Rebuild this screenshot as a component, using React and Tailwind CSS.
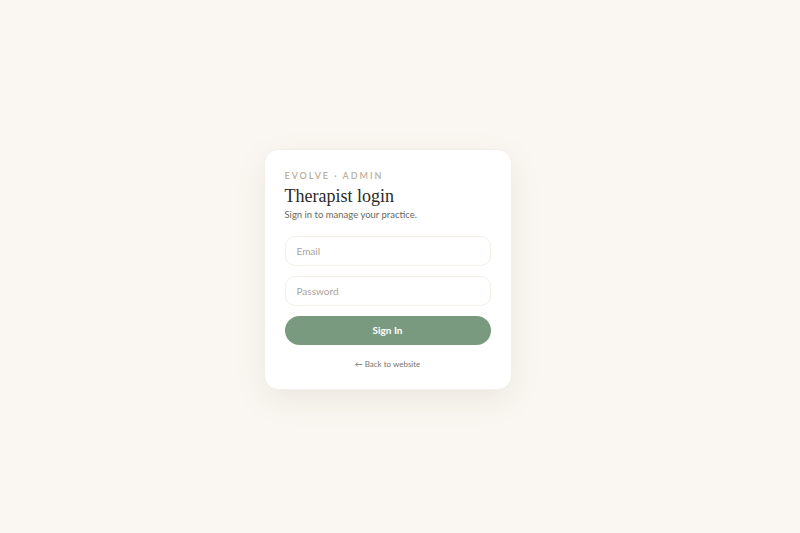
import React from 'react';

const App = () => {
  return (
    <div className="min-h-screen w-full bg-[#faf7f2] flex items-center justify-center pr-[25px] pt-[6px]" style={{ fontFamily: 'Lato, "Noto Sans", sans-serif' }}>
      <div className="w-[248px] bg-white rounded-[14px] px-5 pt-[21px] pb-[19px] shadow-[0_10px_30px_rgba(120,100,70,0.10)] border border-[#f3efe8]">
        <p className="text-[9px] font-semibold tracking-[0.22em] text-[#bbb09a] leading-none">EVOLVE · ADMIN</p>
        <h1 className="mt-[5px] text-[18px] leading-[22px] text-[#2b2a27]" style={{ fontFamily: '"Liberation Serif", "DejaVu Serif", serif' }}>
          Therapist login
        </h1>
        <p className="mt-[1px] text-[9.5px] text-[#6b6860]">Sign in to manage your practice.</p>
        <form className="mt-[14px] flex flex-col gap-[10px]" onSubmit={e => e.preventDefault()}>
          <input
            type="email"
            placeholder="Email"
            className="h-[30px] w-full rounded-[10px] border border-[#f3efe6] px-[11px] text-[10px] text-[#3a3835] placeholder:text-[#a8a49c] outline-none"
          />
          <input
            type="password"
            placeholder="Password"
            className="h-[30px] w-full rounded-[10px] border border-[#f3efe6] px-[11px] text-[10px] text-[#3a3835] placeholder:text-[#a8a49c] outline-none"
          />
          <button type="submit" className="h-[29px] w-full rounded-full bg-[#7a9a80] text-white text-[10px] font-bold">
            Sign In
          </button>
        </form>
        <p className="mt-[13px] text-center text-[8px] text-[#77746d]">← Back to website</p>
      </div>
    </div>
  );
};

export default App;
